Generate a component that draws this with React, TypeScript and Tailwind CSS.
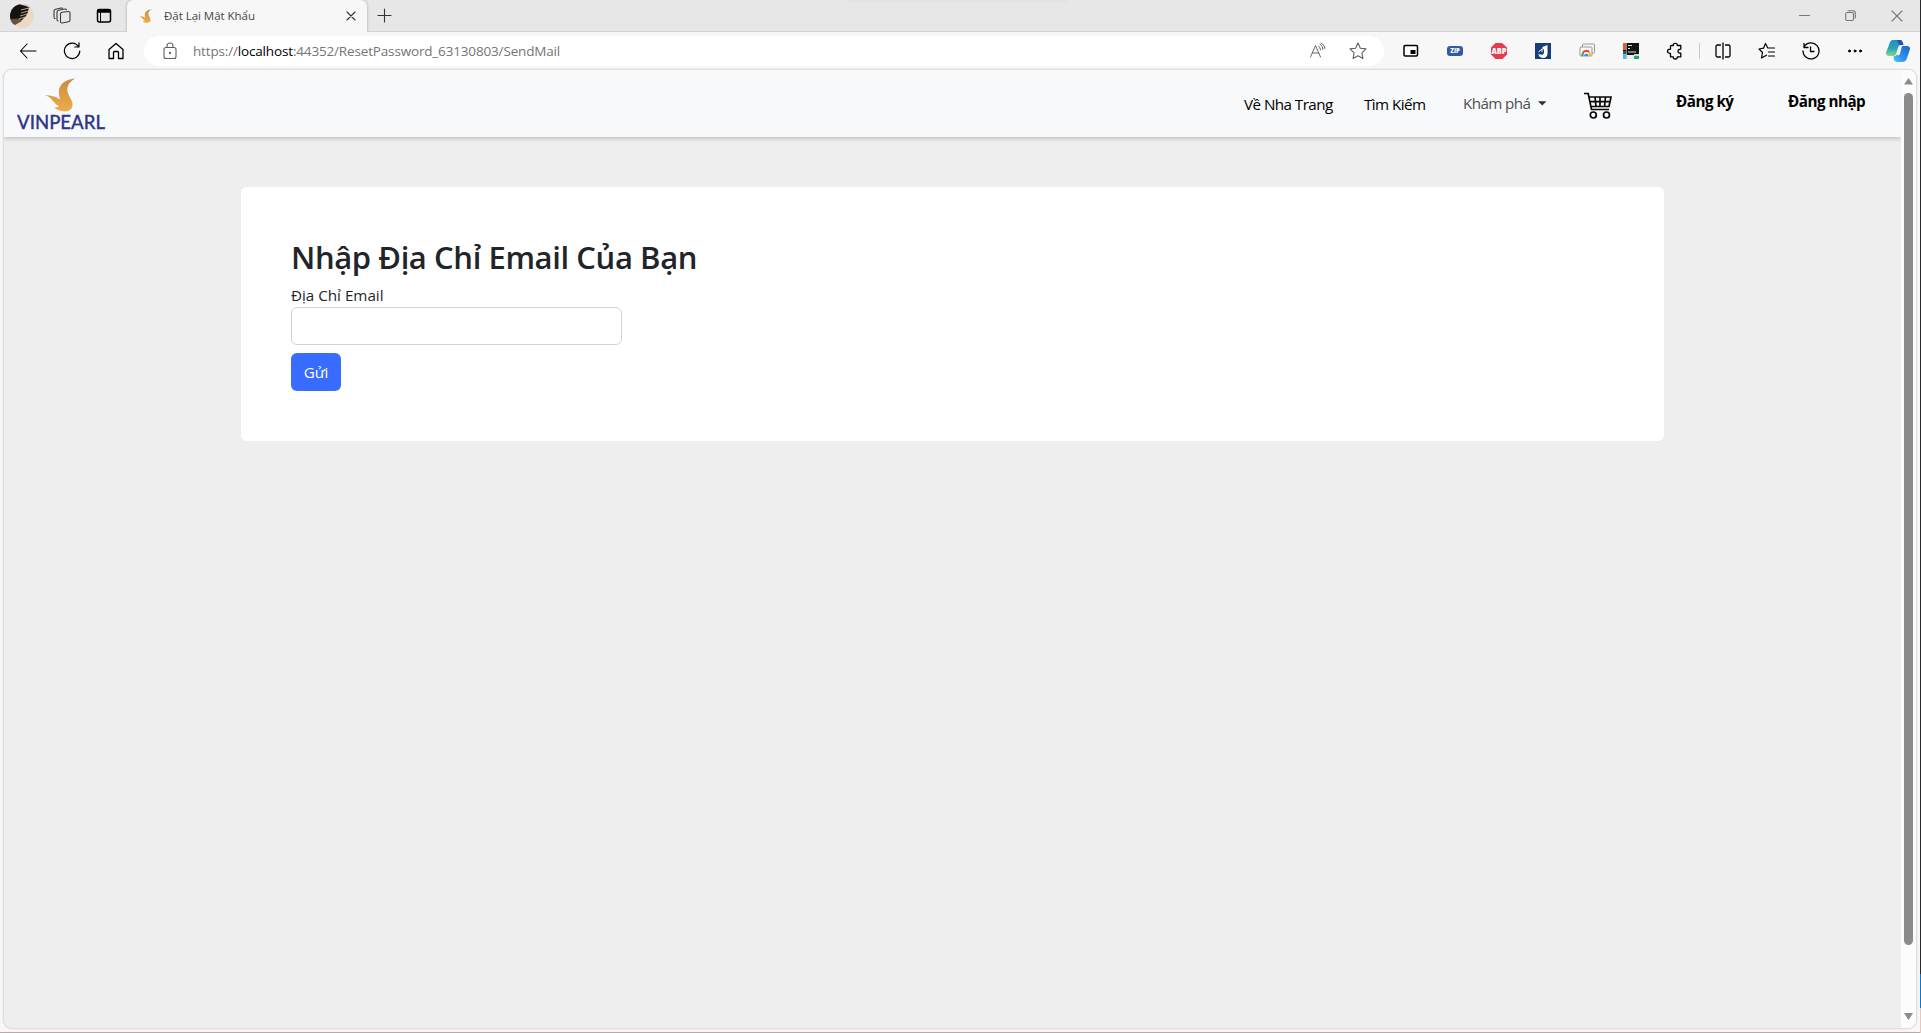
import type { ReactNode } from "react";

const ui = "font-['Open_Sans','Noto_Sans',sans-serif]";

function Slot({ children }: { children: ReactNode }) {
  return <div className="flex h-full w-11 shrink-0 items-center justify-center">{children}</div>;
}

function Line({ size = 18, children, className = "text-black", width = 1.1 }: { size?: number; children: ReactNode; className?: string; width?: number }) {
  return (
    <svg width={size} height={size} viewBox={`0 0 ${size} ${size}`} fill="none" stroke="currentColor" strokeWidth={width} strokeLinecap="round" strokeLinejoin="round" className={`shrink-0 ${className}`}>
      {children}
    </svg>
  );
}

function Bird({ width, height }: { width: number; height: number }) {
  return (
    <svg width={width} height={height} viewBox="0 0 31 34" className="shrink-0" preserveAspectRatio="none">
      <defs>
        <linearGradient id="gold" x1="0" y1="0" x2="0" y2="1">
          <stop offset="0" stopColor="#c98b45" />
          <stop offset="1" stopColor="#f0ac48" />
        </linearGradient>
      </defs>
      <path d="M30.500 .4C21 1 13.500 6 13.800 14.500C13.900 17.500 14.500 19.500 15 21.500C11 18.500 6 17.500 0 17.300C4 18.500 6 20.500 8 23C10 25.500 12 27 14 28.500C12.500 29.300 10.500 29.500 9 29.500C12 32 17 33.800 21.500 33.300C26 32.500 28 29 27.500 25.500C26.800 21 22.500 16.500 22.300 12C22.100 7.500 25 3 30.500 .4Z" fill="url(#gold)" />
    </svg>
  );
}

function Avatar() {
  return (
    <svg width="24" height="24" viewBox="0 0 24 24">
      <defs><clipPath id="face"><circle cx="12" cy="12" r="12" /></clipPath></defs>
      <g clipPath="url(#face)">
        <rect width="24" height="24" fill="#ecd9c3" />
        <path d="M0 0H9L19 3L18 8L16 12L12 16L0 16Z" fill="#17120f" />
        <path d="M13 0H24V5L18 3Z" fill="#c6b39e" />
        <path d="M0 15L10 14.500L12 17L5 21L0 19Z" fill="#69513e" />
        <path d="M11 6L19 4M11 9L18.500 7M10 12L17 10M9 15L15 13" stroke="#d8c8b6" strokeWidth=".8" />
      </g>
    </svg>
  );
}

function TitleBar() {
  return (
    <div className="flex h-8 shrink-0 border-b border-[#d3d3d3] bg-[#e7e7e7]">
      <div className="flex w-[127px] shrink-0 items-center pl-[10px]">
        <Avatar />
        <div className="ml-[19px] flex">
          <Line className="text-[#3a3a3a]">
            <path d="M9 5.200L15.500 4.500Q17 4.400 17 6V13Q17 14.500 15.500 14.800L9 16Q7.500 16.200 7.500 14.500V7Q7.500 5.400 9 5.200Z" />
            <path d="M5 14L4.600 13.800Q4 13.500 4 12V5Q4 3.500 5.500 3.200L11.500 2Q13 1.800 13.500 2.800M2 11.500L1.500 11.200Q1 10.800 1 9.500V4Q1 2.500 2.500 2.200L8 1Q9 .8 9.500 1.200" />
          </Line>
        </div>
        <div className="ml-[24px] flex">
          <Line width={1.500}>
            <rect x="2.500" y="2.500" width="13" height="12.500" rx="2" />
            <path d="M5.500 5.500V15" strokeWidth="1" />
            <path d="M3 3H15V5H3Z" fill="currentColor" />
          </Line>
        </div>
      </div>
      <div className="flex h-8 w-60 shrink-0 items-center rounded-t-[6px] bg-[#f7f7f7] pl-[12px] pr-[11px] shadow-[0_0_3px_rgba(0,0,0,0.3)] [clip-path:inset(0_-4px_0_-4px)]">
        <Bird width={13} height={14} />
        <span className="ml-3 whitespace-nowrap text-[11.500px] tracking-[-0.030px] text-[#454545]">Đặt Lại Mật Khẩu</span>
        <Line size={10} className="ml-auto text-[#333]"><path d="M1 1L9 9M9 1L1 9" /></Line>
      </div>
      <div className="flex items-center pl-[10px]"><Line size={15} className="text-[#333]"><path d="M7.500 1V14M1 7.500H14" /></Line></div>
      <div className="ml-[455px] h-1 w-[220px] bg-linear-to-b from-[#e2e2e2] to-[#e7e7e7]" />
      <div className="ml-auto flex items-center text-[#777]">
        <Line size={11} className="mr-[35px] text-[#777]"><path d="M.5 5.500H10.500" /></Line>
        <Line size={11} className="mr-[35px] text-[#777]">
          <rect x=".7" y="2.500" width="7.800" height="8" rx="1.500" />
          <path d="M3 .7H8Q10.300 .7 10.300 3V8" />
        </Line>
        <Line size={12} className="mr-[17px] text-[#777]"><path d="M1 1L11 11M11 1L1 11" /></Line>
      </div>
    </div>
  );
}

function Toolbar() {
  return (
    <div className="flex h-[37px] shrink-0 items-center bg-[#f7f7f7] pl-[6px]">
      <Slot><Line><path d="M8 2L1.500 9L8 16M1.500 9H17" /></Line></Slot>
      <Slot><Line width={1.200}><path d="M15.500 4.500A7.700 7.700 0 1 0 16.800 9M16 .8V5H11.800" /></Line></Slot>
      <Slot><Line width={1.300}><path d="M2 7.500L9 1.500L16 7.500V16.500H11.500V10.500Q11.500 9.500 10.500 9.500H7.500Q6.500 9.500 6.500 10.500V16.500H2Z" /></Line></Slot>
      <div className="ml-[6px] flex h-[30px] w-[1240px] shrink-0 items-center rounded-full bg-white pl-[17px] pr-[17px]">
        <Line className="text-[#606060]">
          <rect x="3" y="5.500" width="12" height="11" rx="2" />
          <path d="M6 5.500V4A3 3 0 0 1 12 4V5.500" />
          <circle cx="9" cy="11" r=".6" fill="currentColor" />
        </Line>
        <span className="ml-[14px] whitespace-nowrap pt-px text-[13.500px] tracking-[-0.160px] text-[#757575]">https://<span className="text-black">localhost</span>:44352/ResetPassword_63130803/SendMail</span>
        <div className="ml-auto flex items-center gap-[22px]">
          <Line className="text-[#666]" width={1}>
            <path d="M1.500 15L6.500 3.500L11.500 15M3.300 11H9.800M9.500 4Q11.500 5.500 11.500 8M11 2Q14 4 14 7.500M12 .8Q16 3 16 6.500" />
          </Line>
          <Line className="text-[#606060]"><path d="M9 1L11.400 6.200L17 6.900L12.900 10.800L13.900 16.500L9 13.700L4.100 16.500L5.100 10.800L1 6.900L6.600 6.200Z" /></Line>
        </div>
      </div>
      <div className="w-[5px]" />
      <Slot>
        <svg width="16" height="14" viewBox="0 0 16 14"><rect x="1" y="1.500" width="13.500" height="10.500" rx="1.200" fill="#fff" stroke="#000" strokeWidth="1.500" /><rect x="7.500" y="6" width="5" height="4" /></svg>
      </Slot>
      <Slot><div className="flex h-[10px] w-4 items-center justify-center rounded-[3px] bg-[#315da0] text-[6px] font-extrabold leading-none text-white">ZIP</div></Slot>
      <Slot>
        <svg width="18" height="18" viewBox="0 0 18 18"><path d="M5.500 1H12L17 5.500V12.500L12.500 17H5.500L1 12.500V5.500Z" fill="#e43b4e" /><text x="9" y="11.800" textAnchor="middle" textLength="15" lengthAdjust="spacingAndGlyphs" fontSize="8" fontWeight="800" fill="#fff">ABP</text></svg>
      </Slot>
      <Slot>
        <svg width="16" height="16" viewBox="0 0 16 16"><rect width="16" height="16" fill="#173e7c" /><path d="M7.500 4L12.500 2V11Q12 15 8 15Q3.500 14.500 3.500 11L5.500 11.500Q9 12.500 9 9V6L7.500 7Z" fill="#fff" /><path d="M3.500 9L7 6V9" stroke="#fff" fill="none" /></svg>
      </Slot>
      <Slot>
        <svg width="17" height="15" viewBox="0 0 17 15" fill="#f7f7f7" stroke="#999"><rect x="3.500" y="1" width="12" height="9" rx="1" /><rect x="1" y="4" width="12" height="9" rx="1" /><g fill="none" strokeWidth="2"><path d="M3.500 13A4 4 0 0 1 4.500 9.500" stroke="#34a853" /><path d="M4 9.500A4 4 0 0 1 10 9" stroke="#e44335" /><path d="M10 9Q11 10.500 11 13" stroke="#fbbc05" /></g><path d="M5 13A2.200 2.200 0 0 1 9.500 13Z" fill="#4285f4" stroke="none" /></svg>
      </Slot>
      <Slot>
        <svg width="16" height="16" viewBox="0 0 16 16"><rect width="16" height="16" fill="#101615" /><path d="M0 0H3V7H0Z" fill="#e75a36" /><path d="M0 8H3V11H0Z" fill="#285a75" /><path d="M0 11H4V16H0Z" fill="#55b8ec" /><path d="M4 12H11V16H4Z" fill="#ededed" /><path d="M11 11H16V13H11Z" fill="#cfcfcf" /><path d="M11 13H16V16H11Z" fill="#10a979" /><path d="M3.500 0V16" stroke="#ccc" strokeWidth=".6" /><path d="M5 2.500H9M5 5.500H7M5 9H13" stroke="#ddd" strokeWidth="1" /></svg>
      </Slot>
      <Slot>
        <Line width={1.300}><path d="M5.500 3.500H7.300Q7 1.300 9.300 1.300T11.300 3.500H14.800V7.200Q12 7 12 9.200T14.800 11.200V14.800H11.300Q11.500 17 9.300 17T7.300 14.800H4.500V11.300Q1.500 11.400 1.500 9.200T4.500 7.200V4.500Q4.500 3.500 5.500 3.500Z" /></Line>
      </Slot>
      <div className="flex w-1 shrink-0 justify-center"><div className="h-4 w-px bg-[#c8c8c8]" /></div>
      <Slot><Line width={1.300}><path d="M6.500 3H3.500Q2 3 2 4.500V13.500Q2 15 3.500 15H6.500M11.500 3H14.500Q16 3 16 4.500V13.500Q16 15 14.500 15H11.500M9 1V17" /></Line></Slot>
      <Slot><Line width={1.200}><path d="M8.500 13.200L3.500 16L4.500 10.500L1 7L5.500 6.200L7.500 1.500L9.800 6H16.500M10.500 10H16.500M10.500 14H16.500" /></Line></Slot>
      <Slot><Line width={1.300}><path d="M2 5A8 8 0 1 1 1 9M2 1.500V5.500H6M8.500 5V9.500H12" /></Line></Slot>
      <Slot><Line width={1}><g fill="currentColor"><circle cx="3.500" cy="9" r="1" /><circle cx="9" cy="9" r="1" /><circle cx="14.500" cy="9" r="1" /></g></Line></Slot>
      <svg width="24" height="22" viewBox="0 0 24 22" className="ml-[9px] shrink-0">
        <defs>
          <linearGradient id="left" x1="0" y1="0" x2="0" y2="1"><stop stopColor="#258ec6" /><stop offset=".5" stopColor="#2ba1b8" /><stop offset="1" stopColor="#7bdc91" /></linearGradient>
          <linearGradient id="right" x1="1" y1="0" x2="0" y2="1"><stop stopColor="#1765ce" /><stop offset=".6" stopColor="#3590ec" /><stop offset="1" stopColor="#3ed5f5" /></linearGradient>
        </defs>
        <path d="M7 0H14Q16 0 16.500 2L17.500 5H15Q13 5 12.300 7L10 14Q9.500 16 7.500 16H3Q0 16 0 12.500Q2 8 4 2Q5 0 7 0Z" fill="url(#left)" />
        <path d="M16 6H21Q24 6 24 9L21 18Q20 22 16 22H11Q9 22 8 20L7.500 16.500Q10 16.500 11 14.500L12 15.500Q13.500 15.500 14 13.500Z" fill="url(#right)" />
        <path d="M11 0H14Q16 0 16.500 2L17.500 5H15Q12.500 5 12 2Z" fill="#234fbd" />
      </svg>
    </div>
  );
}

function Navbar() {
  return (
    <nav className="relative flex h-[67px] w-full shrink-0 items-center bg-[#f8f9fb] text-[15.200px] text-black shadow-[0_2px_4px_rgba(0,0,0,0.18)]">
      <div className="flex w-[1240px] shrink-0 pl-[13px] pt-1">
        <div className="flex w-[90px] flex-col">
          <div className="flex pl-[28px]"><Bird width={31} height={34} /></div>
          <svg width="90" height="24" viewBox="0 0 90 24" className="-mt-[3px]">
            <text x="0" y="20" textLength="88" lengthAdjust="spacingAndGlyphs" fill="#2e3788" fontFamily="Lato, sans-serif" fontSize="19" fontWeight="500" stroke="#2e3788" strokeWidth=".3">VINPEARL</text>
          </svg>
        </div>
      </div>
      <a className="w-[120px] shrink-0 whitespace-nowrap pt-px tracking-[-0.550px]">Về Nha Trang</a>
      <a className="w-[99px] shrink-0 whitespace-nowrap pt-px tracking-[-0.550px]">Tìm Kiếm</a>
      <div className="flex w-[121px] shrink-0 items-center whitespace-nowrap tracking-[-0.600px] text-[#4e4f51]">
        <span className="w-[75px]">Khám phá</span>
        <svg width="9" height="5" viewBox="0 0 9 5"><path d="M0 .2H8.500L4.300 4.500Z" fill="#333" /></svg>
      </div>
      <div className="w-[92px] shrink-0 pt-[5px]">
        <svg width="28" height="28" viewBox="0 0 28 28" fill="none" stroke="#080808" strokeWidth="1.700">
          <path d="M0 1.500H4.200L7.500 17.500H25M5 5H27L25 14.500H7M6 9.700H26M11 5L12 14.500M16 5V14.500M21.500 5L20.500 14.500" />
          <circle cx="9.300" cy="23" r="3" /><circle cx="22.500" cy="23" r="3" />
        </svg>
      </div>
      <a className="w-28 shrink-0 whitespace-nowrap pb-[5px] font-bold tracking-[-0.500px]">Đăng ký</a>
      <a className="whitespace-nowrap pb-[5px] font-bold tracking-[-0.500px]">Đăng nhập</a>
    </nav>
  );
}

function EmailCard() {
  return (
    <main className="ml-[237px] mt-[50px] flex h-[254px] w-[1423px] shrink-0 flex-col items-start rounded-[6px] bg-white pl-[50px] pt-[50px] text-[#212529]">
      <h1 className="h-[46px] whitespace-nowrap text-[31px] font-semibold leading-[40px] tracking-[-0.400px]">Nhập Địa Chỉ Email Của Bạn</h1>
      <label htmlFor="email" className="h-6 whitespace-nowrap text-[15.200px] leading-6">Địa Chỉ Email</label>
      <input id="email" type="email" className="h-[38px] w-[331px] rounded-[6px] border border-[#ced4da] bg-white px-3 outline-none" />
      <button className="mt-2 h-[38px] w-[50px] rounded-[6px] bg-[#386bff] text-[15.200px] tracking-[-0.200px] text-white">Gửi</button>
    </main>
  );
}

export default function App() {
  return (
    <div className={`flex h-[1033px] w-[1921px] overflow-hidden bg-[#f7f7f7] ${ui}`}>
      <div className="flex w-[1920px] shrink-0 flex-col border-b border-[#b9aaa7]">
        <TitleBar />
        <Toolbar />
        <div className="ml-[3px] flex h-[960px] w-[1914px] shrink-0 overflow-hidden rounded-[9px] border border-[#dedede] bg-[#eee] shadow-[0_0_2px_rgba(0,0,0,0.12)]">
          <div className="flex w-[1897px] shrink-0 flex-col overflow-hidden">
            <Navbar />
            <EmailCard />
          </div>
          <div className="flex w-[15px] shrink-0 flex-col items-center bg-[#fcfcfc] pt-2">
            <svg width="9" height="7" viewBox="0 0 9 7"><path d="M4.500 0L9 6.500H0Z" fill="#8b8b8b" /></svg>
            <div className="mt-2 h-[852px] w-[9px] rounded-full bg-[#8b8b8b]" />
            <svg width="9" height="7" viewBox="0 0 9 7" className="mt-[68px]"><path d="M0 0H9L4.500 7Z" fill="#8b8b8b" /></svg>
          </div>
        </div>
      </div>
      <div className="flex w-px shrink-0 flex-col">
        <div className="h-[974px] bg-[#29292b]" />
        <div className="h-[34px] bg-[#0078d4]" />
        <div className="flex-1 bg-[#e8c8bc]" />
      </div>
    </div>
  );
}
